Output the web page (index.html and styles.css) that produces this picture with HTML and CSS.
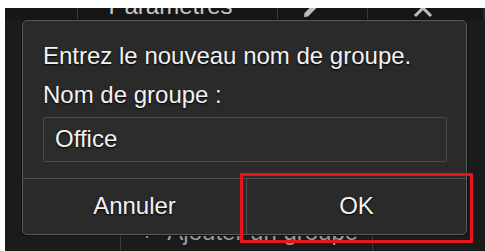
FILE: index.html
```html
<!DOCTYPE html>
<html lang="fr">
<head>
<meta charset="utf-8">
<link rel="stylesheet" href="styles.css">
</head>
<body>
<div class="screen">
  <div class="topbar">
    <div class="cell c1"></div>
    <div class="cell c2"><span class="toptext">Paramètres</span></div>
    <div class="cell c3">
      <svg class="pencil" width="24" height="24" viewBox="0 0 24 24"><path d="M3 21 L7 20.5 L21 6.5 L17.5 3 L3.5 17 Z" fill="#bdbdbd"/></svg>
    </div>
    <div class="cell c4">
      <svg class="xicon" width="22" height="22" viewBox="0 0 22 22"><path d="M3 3 L19 19 M19 3 L3 19" stroke="#bdbdbd" stroke-width="3" fill="none"/></svg>
    </div>
  </div>
  <div class="spacer"></div>
  <div class="bottombar">
    <div class="bcell b1"></div>
    <div class="bcell b2"><span class="addtext">+&nbsp;&nbsp;Ajouter un groupe</span></div>
    <div class="bcell b3"></div>
  </div>

  <div class="dialog">
    <p class="msg">Entrez le nouveau nom de groupe.</p>
    <p class="label">Nom de groupe :</p>
    <div class="input">Office</div>
    <div class="buttons">
      <div class="btn cancel">Annuler</div>
      <div class="btn ok">OK</div>
    </div>
  </div>
  <div class="highlight"></div>
</div>
</body>
</html>
```

FILE: styles.css
```css
html, body {
  margin: 0;
  padding: 0;
  background: #ffffff;
}
body {
  width: 485px;
  height: 251px;
  box-sizing: border-box;
  padding: 8px 0 0 5px;
  overflow: hidden;
  font-family: "Liberation Sans", Arial, sans-serif;
}
.screen {
  position: relative;
  width: 480px;
  height: 243px;
  background: #1b1b1b;
  display: flex;
  flex-direction: column;
  overflow: hidden;
}
.topbar {
  height: 12px;
  display: flex;
  overflow: hidden;
  background: #161616;
}
.cell {
  display: flex;
  justify-content: center;
  border-right: 1px solid #3a3a3a;
  box-sizing: border-box;
}
.c1 { width: 73px; }
.c2 { width: 200px; padding-right: 14px; }
.c3 { width: 90px; }
.c4 { flex: 1; border-right: 2px solid #2a2a2a; }
.toptext {
  font-size: 24px;
  line-height: 28px;
  margin-top: -16px;
  color: #c8c8c8;
}
.pencil { margin-top: -12px; margin-left: -20px; }
.xicon { margin-top: -11px; margin-left: -6px; }
.spacer { flex: 1; }
.bottombar {
  height: 16px;
  display: flex;
  overflow: hidden;
}
.bcell { box-sizing: border-box; }
.b1 { width: 115px; }
.b2 {
  width: 253px;
  border-left: 1px solid #3c3c3c;
  border-right: 1px solid #3c3c3c;
  padding-left: 19px;
}
.b3 { flex: 1; }
.addtext {
  display: block;
  font-size: 24px;
  line-height: 28px;
  margin-top: -17px;
  color: #9a9a9a;
  white-space: nowrap;
}
.dialog {
  position: absolute;
  left: 17px;
  top: 12px;
  width: 445px;
  height: 215px;
  box-sizing: border-box;
  background: #2a2a2a;
  border: 1px solid #5a5a5a;
  border-radius: 5px;
  box-shadow: 0 0 0 1px #111;
  display: flex;
  flex-direction: column;
  color: #f2f2f2;
  text-shadow: 0 1px 2px #000;
}
.msg, .label {
  margin: 0;
  padding: 0 20px;
  font-size: 24px;
  line-height: 28px;
  white-space: nowrap;
}
.msg { margin-top: 21px; }
.label { margin-top: 11px; }
.input {
  margin: 8px 19px 0 20px;
  height: 45px;
  box-sizing: border-box;
  border: 1px solid #4a4a4a;
  border-radius: 2px;
  background: #2c2c2c;
  padding-left: 11px;
  font-size: 24px;
  line-height: 42px;
}
.buttons {
  margin-top: 16px;
  border-top: 1px solid #505050;
  flex: 1;
  display: flex;
}
.btn {
  display: flex;
  align-items: center;
  justify-content: center;
  font-size: 24px;
  padding-bottom: 2px;
}
.cancel {
  width: 223px;
  border-right: 1px solid #505050;
}
.ok { flex: 1; }
.highlight {
  position: absolute;
  left: 235px;
  top: 165px;
  width: 233px;
  height: 70px;
  box-sizing: border-box;
  border: 3px solid #e8141c;
}
```
